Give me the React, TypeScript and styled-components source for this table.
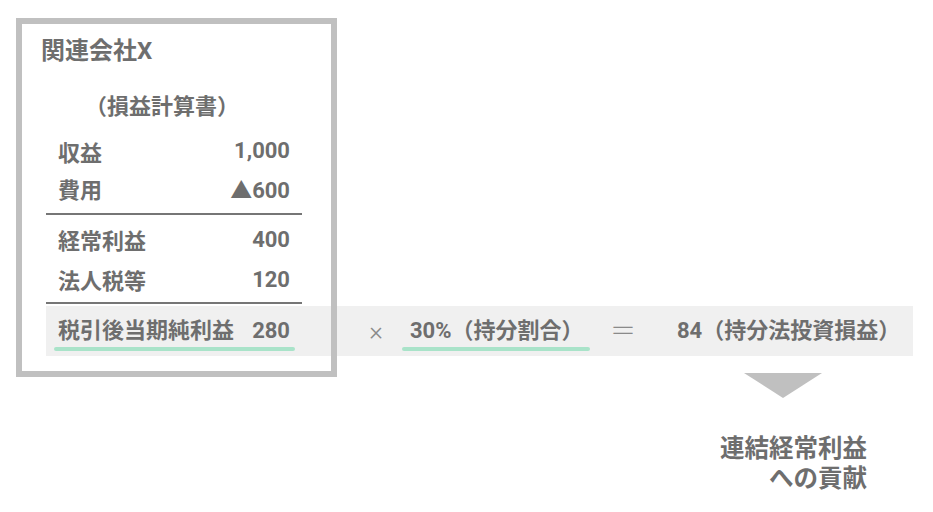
import React from "react";
import styled, { createGlobalStyle } from "styled-components";

const Global = createGlobalStyle`
  html, body { margin: 0; padding: 0; background: #ffffff; }
  body {
    font-family: Roboto, "Noto Sans CJK JP", "Noto Sans", sans-serif;
    color: #6e6e6e;
  }
`;

const Canvas = styled.div`
  width: 933px;
  height: 512px;
  box-sizing: border-box;
  padding: 18px 0 0 16px;
  overflow: hidden;
`;

const Box = styled.div`
  position: relative;
  width: 321px;
  height: 359px;
  box-sizing: border-box;
  padding: 6px;
  display: flex;
  flex-direction: column;
  &::after {
    content: "";
    position: absolute;
    inset: 0;
    border: 6px solid #c0c0c0;
    pointer-events: none;
    z-index: 2;
  }
`;

const Title = styled.div`
  margin: 12px 0 0 19px;
  font-size: 24px;
  font-weight: 700;
  line-height: 30px;
`;

const Subtitle = styled.div`
  margin: 26px 0 0 63px;
  font-size: 22px;
  font-weight: 700;
  line-height: 30px;
`;

const Table = styled.div`
  margin: 10px 0 0 24px;
  width: 256px;
  display: flex;
  flex-direction: column;
`;

const Row = styled.div<{ $h: number }>`
  height: ${(p) => p.$h}px;
  padding: 0 12px;
  display: flex;
  align-items: center;
  justify-content: space-between;
  font-size: 22px;
  font-weight: 700;
`;

const Divider = styled.div<{ $mt: number; $mb: number }>`
  height: 2px;
  background: #767676;
  margin: ${(p) => p.$mt}px 0 ${(p) => p.$mb}px;
`;

const Band = styled.div`
  margin-top: 2px;
  width: 867px;
  height: 50px;
  background: #f0f0f0;
  display: flex;
  align-items: flex-start;
`;

const Cell = styled.div<{ $w?: number; $ml?: number }>`
  ${(p) => (p.$w ? `width: ${p.$w}px;` : "")}
  margin-left: ${(p) => p.$ml ?? 0}px;
  display: flex;
  flex-direction: column;
  padding-top: 10px;
`;

const CellText = styled.div<{ $pad?: string }>`
  height: 30px;
  line-height: 30px;
  padding: ${(p) => p.$pad ?? "0"};
  display: flex;
  justify-content: space-between;
  font-size: 22px;
  font-weight: 700;
  white-space: nowrap;
`;

const Operator = styled.div`
  height: 30px;
  line-height: 30px;
  text-align: center;
  font-size: 26px;
  font-weight: 300;
  color: #8a8a8a;
`;

const Underline = styled.div<{ $l?: number; $r?: number }>`
  margin: 1px ${(p) => p.$r ?? 0}px 0 ${(p) => p.$l ?? 0}px;
  height: 4px;
  border-radius: 2px;
  background: #a9e3c9;
`;

const Footer = styled.div`
  margin: -4px 0 0 704px;
  display: flex;
  flex-direction: column;
  align-items: flex-start;
`;

const Arrow = styled.div`
  margin-left: 24px;
  width: 0;
  height: 0;
  border-left: 39px solid transparent;
  border-right: 39px solid transparent;
  border-top: 25px solid #c0c0c0;
`;

const Note = styled.div`
  margin-top: 36px;
  width: 147px;
  font-size: 24.5px;
  font-weight: 700;
  line-height: 30px;
  white-space: nowrap;
  display: flex;
  flex-direction: column;
  align-items: flex-end;
`;

export default function App() {
  return (
    <>
      <Global />
      <Canvas>
        <Box>
          <Title>関連会社X</Title>
          <Subtitle>（損益計算書）</Subtitle>
          <Table>
            <Row $h={37}>
              <span>収益</span>
              <span>1,000</span>
            </Row>
            <Row $h={37}>
              <span>費用</span>
              <span>▲600</span>
            </Row>
            <Divider $mt={7} $mb={4} />
            <Row $h={40}>
              <span>経常利益</span>
              <span>400</span>
            </Row>
            <Row $h={40}>
              <span>法人税等</span>
              <span>120</span>
            </Row>
            <Divider $mt={3} $mb={0} />
            <Band>
              <Cell $w={256}>
                <CellText $pad="0 12px">
                  <span>税引後当期純利益</span>
                  <span>280</span>
                </CellText>
                <Underline $l={8} $r={7} />
              </Cell>
              <Cell $w={20} $ml={64}>
                <Operator>×</Operator>
              </Cell>
              <Cell $w={188} $ml={16}>
                <CellText $pad="0 0 0 8px">30%（持分割合）</CellText>
                <Underline />
              </Cell>
              <Cell $w={22} $ml={20}>
                <Operator>＝</Operator>
              </Cell>
              <Cell $ml={45}>
                <CellText>84（持分法投資損益）</CellText>
              </Cell>
            </Band>
          </Table>
        </Box>
        <Footer>
          <Arrow />
          <Note>
            <span>連結経常利益</span>
            <span>への貢献</span>
          </Note>
        </Footer>
      </Canvas>
    </>
  );
}
